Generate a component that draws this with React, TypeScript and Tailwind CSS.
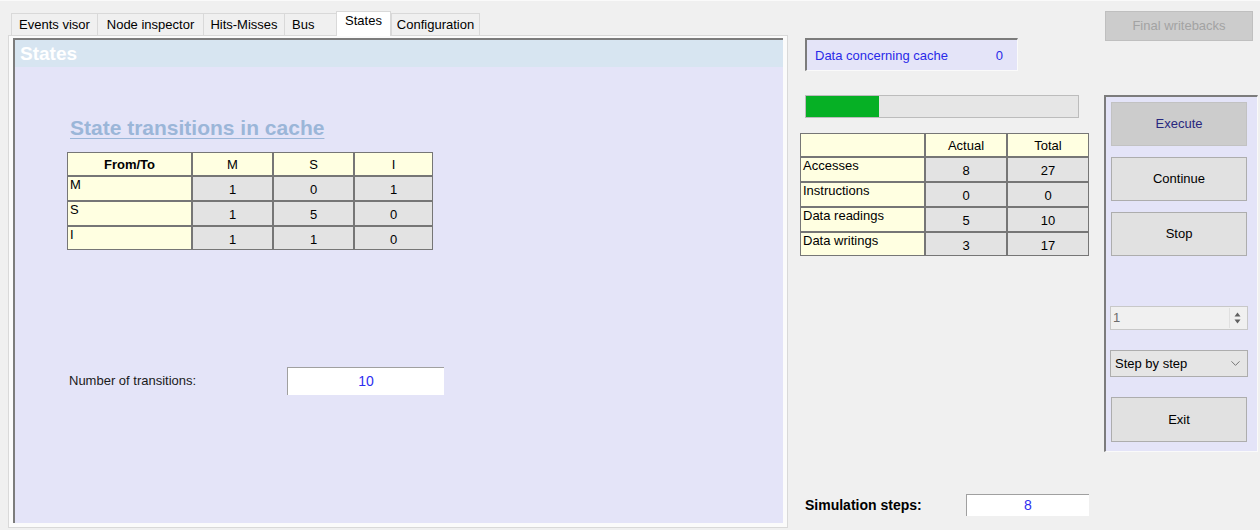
import React from "react";
import { ChevronDown } from "lucide-react";

const Tab = ({ label, w, selected, left }: { label: string; w: number; selected?: boolean; left?: boolean }) => (
  <div
    className={
      selected
        ? "h-[25px] bg-white border border-b-0 border-[#d9d9d9] flex items-start justify-center pt-[2px] relative z-10 -mb-[1px]"
        : "h-[22px] bg-[#f0f0f0] border border-b-0 border-r-0 border-[#d9d9d9] flex items-center " +
          (left ? "justify-start pl-[7px]" : "justify-center")
    }
    style={{ width: w }}
  >
    <span className="text-[13px] text-black leading-none">{label}</span>
  </div>
);

const HeadCell = ({ children, bold }: { children?: React.ReactNode; bold?: boolean }) => (
  <div className={"bg-[#ffffe1] flex items-center justify-center pt-[1px] text-[13px] text-black " + (bold ? "font-bold" : "")}>
    {children}
  </div>
);
const RowCell = ({ children }: { children?: React.ReactNode }) => (
  <div className="bg-[#ffffe1] flex items-start pl-[2px] text-[13px] leading-[15px] text-black">{children}</div>
);
const DataCell = ({ children }: { children?: React.ReactNode }) => (
  <div className="bg-[#e3e3e3] flex items-center justify-center pt-[3px] text-[13px] text-black">{children}</div>
);

const WinButton = ({ label, primary }: { label: string; primary?: boolean }) => (
  <div
    className={
      primary
        ? "w-[136px] h-[44px] bg-[#cccccc] border border-[#c2c2c2] flex items-center justify-center text-[13px] text-[#28287e]"
        : "w-[136px] h-[44px] bg-[#e1e1e1] border border-[#adadad] flex items-center justify-center text-[13px] text-black"
    }
  >
    {label}
  </div>
);

export default function App() {
  return (
    <div className="w-[1260px] h-[530px] bg-[#f0f0f0] flex font-['Liberation_Sans',Arial,sans-serif] border-t border-[#fafafa] overflow-hidden">
      {/* Left tab control */}
      <div className="w-[780px] ml-[8px] mt-[9px] flex flex-col">
        <div className="flex items-end h-[25px] ml-[3px]">
          <Tab label="Events visor" w={86} />
          <Tab label="Node inspector" w={106} />
          <Tab label="Hits-Misses" w={81} />
          <Tab label="Bus" w={52} left />
          <Tab label="States" w={55} selected />
          <div className="h-[22px] w-[89px] bg-[#f0f0f0] border border-b-0 border-[#d9d9d9] flex items-center justify-center">
            <span className="text-[13px] text-black leading-none">Configuration</span>
          </div>
        </div>
        <div className="h-[493px] border border-[#d9d9d9] bg-[#fbfbfb] pt-[2px] px-[4px] pb-[4px] flex">
          <div className="flex-1 flex flex-col bg-[#e4e4f8] border-l-2 border-t-2 border-[#7c7c7c]">
            <div className="h-[27px] bg-[#d7e5f1] flex items-center pl-[5px]">
              <span className="text-[19px] font-bold text-white leading-none">States</span>
            </div>
            <div className="flex flex-col">
              <div className="ml-[55px] mt-[49px] h-[22px] flex items-center">
                <span className="text-[21px] font-bold text-[#9bb6d8] underline decoration-[1px] underline-offset-[3px] leading-none">
                  State transitions in cache
                </span>
              </div>
              <div className="ml-[52px] mt-[14px] w-[366px] grid grid-cols-[123px_79px_79px_77px] grid-rows-[22px_23px_23px_22px] gap-[2px] p-[1px] bg-[#767676]">
                <HeadCell bold>From/To</HeadCell>
                <HeadCell>M</HeadCell>
                <HeadCell>S</HeadCell>
                <HeadCell>I</HeadCell>
                <RowCell>M</RowCell>
                <DataCell>1</DataCell>
                <DataCell>0</DataCell>
                <DataCell>1</DataCell>
                <RowCell>S</RowCell>
                <DataCell>1</DataCell>
                <DataCell>5</DataCell>
                <DataCell>0</DataCell>
                <RowCell>I</RowCell>
                <DataCell>1</DataCell>
                <DataCell>1</DataCell>
                <DataCell>0</DataCell>
              </div>
              <div className="ml-[54px] mt-[117px] flex items-center">
                <span className="w-[218px] text-[13px] text-[#1a1a1a]">Number of transitions:</span>
                <div className="w-[157px] h-[28px] bg-white border-t border-l border-[#a0a0a0] flex items-center justify-center text-[14px] text-[#2e2ef0]">
                  10
                </div>
              </div>
            </div>
          </div>
        </div>
      </div>

      {/* Middle column */}
      <div className="ml-[12px] w-[290px] flex flex-col">
        <div className="ml-[5px] mt-[37px] w-[213px] h-[33px] bg-[#e4e4f8] border-l-2 border-t-2 border-[#7c7c7c] border-r border-b border-r-[#fafafa] border-b-[#fafafa] flex items-center justify-between pl-[8px] pr-[14px] pt-[2px] text-[13px] text-[#2a2ae8]">
          <span>Data concerning cache</span>
          <span>0</span>
        </div>
        <div className="ml-[5px] mt-[24px] w-[274px] h-[23px] bg-[#e6e6e6] border border-[#bcbcbc] flex">
          <div className="bg-[#06b025]" style={{ width: 73 }} />
        </div>
        <div className="mt-[15px] w-[289px] grid grid-cols-[123px_80px_80px] grid-rows-[22px_23px_23px_23px_22px] gap-[2px] p-[1px] bg-[#767676]">
          <HeadCell />
          <HeadCell>Actual</HeadCell>
          <HeadCell>Total</HeadCell>
          <RowCell>Accesses</RowCell>
          <DataCell>8</DataCell>
          <DataCell>27</DataCell>
          <RowCell>Instructions</RowCell>
          <DataCell>0</DataCell>
          <DataCell>0</DataCell>
          <RowCell>Data readings</RowCell>
          <DataCell>5</DataCell>
          <DataCell>10</DataCell>
          <RowCell>Data writings</RowCell>
          <DataCell>3</DataCell>
          <DataCell>17</DataCell>
        </div>
        <div className="mt-auto mb-[14px] ml-[5px] flex items-center">
          <span className="w-[161px] text-[14px] font-bold text-black">Simulation steps:</span>
          <div className="w-[123px] h-[22px] bg-white border-t border-l border-[#a0a0a0] flex items-center justify-center text-[14px] text-[#2e2ef0]">
            8
          </div>
        </div>
      </div>

      {/* Right column */}
      <div className="ml-[14px] w-[154px] flex flex-col">
        <div className="ml-[1px] mt-[10px] w-[148px] h-[30px] bg-[#cccccc] border border-[#bfbfbf] flex items-center justify-center text-[13px] text-[#a3a3a3]">
          Final writebacks
        </div>
        <div className="mt-[54px] h-[357px] bg-[#e4e4f8] border-l-2 border-t-2 border-[#7c7c7c] border-r border-b border-r-[#fafafa] border-b-[#fafafa] flex flex-col pl-[5px] pt-[5px]">
          <WinButton label="Execute" primary />
          <div className="mt-[11px]">
            <WinButton label="Continue" />
          </div>
          <div className="mt-[11px]">
            <WinButton label="Stop" />
          </div>
          <div className="mt-[50px] -ml-[1px] w-[138px] h-[24px] bg-[#f0f0f0] border border-[#c8c8c8] flex items-center">
            <span className="flex-1 pl-[2px] text-[13px] text-[#6d6d6d]">1</span>
            <div className="w-[16px] h-[20px] mr-[2px] flex flex-col items-center justify-center border-l border-[#e0e0e0]">
              <svg width="7" height="5" viewBox="0 0 7 5" className="mb-[2px]">
                <polygon points="3.5,0.5 6.5,4.5 0.5,4.5" fill="#606060" />
              </svg>
              <svg width="7" height="5" viewBox="0 0 7 5">
                <polygon points="0.5,0.5 6.5,0.5 3.5,4.5" fill="#606060" />
              </svg>
            </div>
          </div>
          <div className="mt-[20px] -ml-[1px] w-[138px] h-[27px] bg-[#e5e5e5] border border-[#adadad] flex items-center justify-between pl-[4px] pr-[4px]">
            <span className="text-[13px] text-black">Step by step</span>
            <ChevronDown size={15} strokeWidth={1.2} color="#505050" />
          </div>
          <div className="mt-[20px]">
            <div className="w-[136px] h-[45px] bg-[#e1e1e1] border border-[#adadad] flex items-center justify-center text-[13px] text-black">
              Exit
            </div>
          </div>
        </div>
      </div>
    </div>
  );
}
